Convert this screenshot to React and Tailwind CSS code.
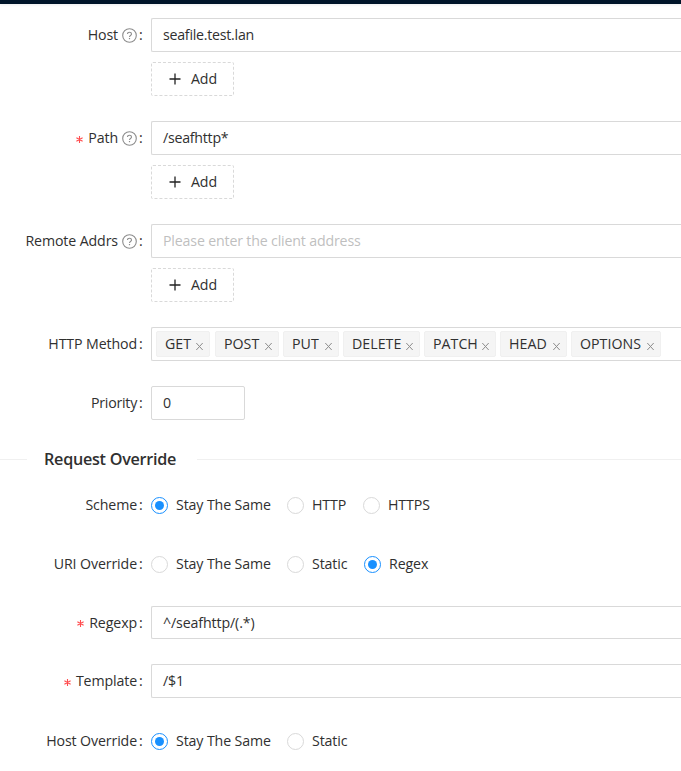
import React from 'react';

const HelpIcon = () => (
  <svg className="ml-1 h-[15px] w-[15px] shrink-0" viewBox="0 0 15 15" fill="none" stroke="#8c8c8c">
    <circle cx="7.5" cy="7.5" r="6.8" strokeWidth="1.1" />
    <path d="M5.5 6.1c0-1.2.9-1.9 2-1.9s2 .7 2 1.8c0 1.5-2 1.5-2 3" strokeWidth="1.1" />
    <path d="M7.5 10v1.2" strokeWidth="1.2" />
  </svg>
);

const CloseIcon = () => (
  <svg className="mt-[5px] h-[7px] w-[7px] shrink-0" viewBox="0 0 7 7" stroke="#8c8c8c" strokeWidth="1">
    <path d="M.3 0l6.4 7M6.7 0L.3 7" />
  </svg>
);

// one label / control line of the form
function FormItem({ label, tracking, required, help, height, children }) {
  return (
    <div className="mb-[25px] flex">
      <div className={`mr-2 flex w-[143px] shrink-0 items-center justify-end whitespace-nowrap ${height || 'h-[34px]'}`}>
        {required && (
          <svg className="mt-[2px] mr-[5px] h-[7px] w-[7px]" viewBox="0 0 7 7" stroke="#ff4d4f" strokeWidth="1.1">
            <path d="M3.5 0v7M.4 1.7l6.2 3.6M6.6 1.7L.4 5.3" />
          </svg>
        )}
        <span className={tracking || ''}>{label}</span>
        {help && <HelpIcon />}
        <span className="w-[6px] pl-[2px]">:</span>
      </div>
      <div className="min-w-0 flex-1">{children}</div>
    </div>
  );
}

function Input({ value, placeholder, tracking, height }) {
  return (
    <div className={`flex items-center rounded-l-[2px] border border-r-0 border-[#d9d9d9] pl-[11px] whitespace-nowrap ${height || 'h-[34px]'}`}>
      <span className={`${tracking || ''} ${placeholder ? 'text-[#bfbfbf]' : ''}`}>{value || placeholder}</span>
    </div>
  );
}

const AddButton = () => (
  <button className="mt-[10px] flex h-[34px] w-[83px] items-center rounded-[2px] border border-dashed border-[#d9d9d9] pl-[17px]">
    <svg className="mr-[10px] h-3 w-3" viewBox="0 0 12 12" stroke="#222" strokeWidth="1.3">
      <path d="M6 .5v11M.5 6h11" />
    </svg>
    Add
  </button>
);

function Radio({ label, checked, width }) {
  return (
    <label className={`flex h-[34px] items-center whitespace-nowrap ${width || ''}`}>
      <span className={`mr-2 flex h-[17px] w-[17px] shrink-0 items-center justify-center rounded-full border ${checked ? 'border-[#1890ff]' : 'border-[#d9d9d9]'}`}>
        {checked && <span className="h-[9px] w-[9px] rounded-full bg-[#1890ff]" />}
      </span>
      {label}
    </label>
  );
}

const methods = [
  { name: 'GET', width: 'w-[54px] mr-px' },
  { name: 'POST', width: 'w-[64px]' },
  { name: 'PUT', width: 'w-[56px]' },
  { name: 'DELETE', width: 'w-[77px]' },
  { name: 'PATCH', width: 'w-[72px]' },
  { name: 'HEAD', width: 'w-[67px]' },
  { name: 'OPTIONS', width: 'w-[90px]' },
];

export function App() {
  return (
    <div className="h-[771px] w-full overflow-hidden bg-white font-['Open_Sans',sans-serif] text-[14.2px] leading-[22px] tracking-[-0.12px] text-[#303030]">
      <div className="h-1 bg-[#001529] shadow-[0_1px_3px_rgba(0,21,41,0.08)]" />
      <div className="pt-[14px]">
        <FormItem label="Host" help>
          <Input value="seafile.test.lan" tracking="tracking-[-0.25px]" />
          <AddButton />
        </FormItem>
        <FormItem label="Path" required help>
          <Input value="/seafhttp*" tracking="tracking-[-0.25px]" />
          <AddButton />
        </FormItem>
        <FormItem label="Remote Addrs" help>
          <Input placeholder="Please enter the client address" tracking="tracking-[-0.17px]" />
          <AddButton />
        </FormItem>
        <FormItem label="HTTP Method">
          <div className="flex h-[34px] items-center gap-1 rounded-l-[2px] border border-r-0 border-[#d9d9d9] pl-1">
            {methods.map(m => (
              <div key={m.name} className={`flex h-[26px] shrink-0 items-center justify-between rounded-[2px] border border-[#f0f0f0] bg-[#f5f5f5] pr-[6px] pl-2 ${m.width}`}>
                <span className="tracking-[0.02px]">{m.name}</span>
                <CloseIcon />
              </div>
            ))}
          </div>
        </FormItem>
        <FormItem label="Priority" tracking="tracking-[-0.25px]">
          <div className="flex h-[34px] w-[94px] items-center rounded-[2px] border border-[#d9d9d9] pl-[11px]">0</div>
        </FormItem>
        <div className="-mt-[2px] flex h-[32px] items-center">
          <div className="h-px w-[27px] bg-[#f0f0f0]" />
          <h2 className="w-[170px] pl-[17px] text-[16.2px] font-semibold tracking-[-0.27px] whitespace-nowrap">Request Override</h2>
          <div className="h-px flex-1 bg-[#f0f0f0]" />
        </div>
        <div className="mt-[13px]">
          <FormItem label="Scheme">
            <div className="flex">
              <Radio label="Stay The Same" checked width="w-[136px]" />
              <Radio label="HTTP" width="w-[76px]" />
              <Radio label="HTTPS" />
            </div>
          </FormItem>
          <FormItem label="URI Override">
            <div className="flex">
              <Radio label="Stay The Same" width="w-[136px]" />
              <Radio label="Static" width="w-[77px]" />
              <Radio label="Regex" checked />
            </div>
          </FormItem>
          <FormItem label="Regexp" required height="h-[33px]">
            <Input value="^/seafhttp/(.*)" height="h-[33px]" />
          </FormItem>
          <FormItem label="Template" required>
            <Input value="/$1" />
          </FormItem>
          <div className="pt-px">
            <FormItem label="Host Override">
              <div className="flex">
                <Radio label="Stay The Same" checked width="w-[136px]" />
                <Radio label="Static" />
              </div>
            </FormItem>
          </div>
        </div>
      </div>
    </div>
  );
}

export default App;
